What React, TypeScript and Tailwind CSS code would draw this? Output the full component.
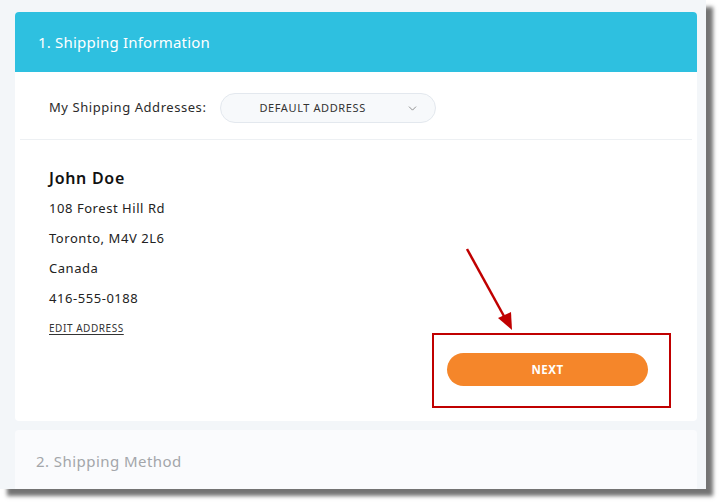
import { ChevronDown } from "lucide-react";

const font = { fontFamily: '"Noto Sans", "Open Sans", sans-serif' };

const addressLines = ["108 Forest Hill Rd", "Toronto, M4V 2L6", "Canada", "416-555-0188"];

const App = () => {
  return (
    <div className="w-[721px] h-[504px] bg-white overflow-hidden" style={font}>
      <div className="relative w-[706px] h-[489px] bg-[#f3f6f9] shadow-[7px_7px_4px_rgba(0,0,0,0.55)] overflow-hidden pt-[12px] px-[15px] flex flex-col gap-[9px]">
        {/* step 1 */}
        <div className="w-[682px] h-[409px] bg-white rounded-[4px] flex flex-col shrink-0">
          <div className="h-[60px] bg-[#2ec0e0] rounded-t-[4px] flex items-center px-[23px]">
            <p className="text-white text-[15px] tracking-[0.2px]">1. Shipping Information</p>
          </div>
          <div className="mx-[5px] h-[68px] border-b border-[#edf0f3] flex items-center px-[29px] pt-[5px] gap-[14px]">
            <p className="text-[13px] text-[#2b2b2b] tracking-[0.55px]">My Shipping Addresses:</p>
            <div className="w-[216px] h-[30px] rounded-full border border-[#e3e8ee] bg-[#f7f9fb] flex items-center pl-[38px] pr-[16px] justify-between">
              <span className="text-[11px] text-[#333] tracking-[0.6px]">DEFAULT ADDRESS</span>
              <ChevronDown size={13} strokeWidth={1.5} className="text-[#777]" />
            </div>
          </div>
          <div className="flex flex-col px-[34px] pt-[27px]">
            <p className="text-[16px] font-semibold text-[#111] leading-[22px] tracking-[0.7px]">John Doe</p>
            <div className="flex flex-col gap-[10px] mt-[9px]">
              {addressLines.map((line, i) => (
                <p key={i} className="text-[13px] text-[#222] leading-[20px] tracking-[0.55px]">
                  {line}
                </p>
              ))}
            </div>
            <p className="mt-[13px] text-[10px] text-[#333] underline underline-offset-2 leading-[14px] tracking-[0.55px]">EDIT ADDRESS</p>
          </div>
          <div className="flex justify-end pr-[49px] mt-[18px]">
            <button className="w-[201px] h-[33px] rounded-full bg-[#f5862a] text-white text-[11.5px] font-bold tracking-[0.5px]">
              NEXT
            </button>
          </div>
        </div>
        {/* step 2 */}
        <div className="w-[682px] h-[80px] bg-[#fafbfd] rounded-[4px] px-[21px] pt-[20px] shrink-0">
          <p className="text-[15px] text-[#a3a6aa] tracking-[0.45px]">2. Shipping Method</p>
        </div>

        {/* annotation */}
        <div className="absolute left-[432px] top-[333px] w-[239px] h-[75px] border-2 border-[#c00000]" />
        <svg className="absolute left-0 top-0" width="706" height="489">
          <line x1="467" y1="249" x2="505" y2="318" stroke="#c00000" strokeWidth="2.5" />
          <polygon points="512,330 498,318 511,312" fill="#c00000" />
        </svg>
      </div>
    </div>
  );
};

export default App;
